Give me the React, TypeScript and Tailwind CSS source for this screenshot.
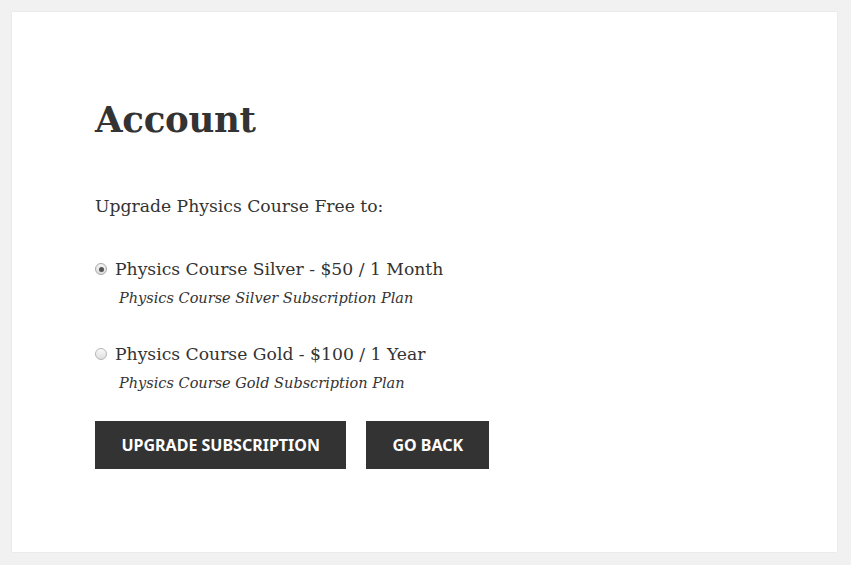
export default function App() {
  const plans = [
    {
      id: "silver",
      label: "Physics Course Silver - $50 / 1 Month",
      desc: "Physics Course Silver Subscription Plan",
      checked: true,
    },
    {
      id: "gold",
      label: "Physics Course Gold - $100 / 1 Year",
      desc: "Physics Course Gold Subscription Plan",
      checked: false,
    },
  ];

  return (
    <div className="min-h-[565px] bg-[#f1f1f1] p-3 font-['DejaVu_Serif',serif] text-[#333]">
      <div className="h-[540px] w-[825px] bg-white pl-[83px] pt-[80px] shadow-[0_0_1px_rgba(0,0,0,0.15)]">
        <h1 className="text-[35.6px] font-bold leading-[56px] tracking-[-0.3px]">Account</h1>

        <p className="mt-[44px] text-[17.2px] leading-[28px]">Upgrade Physics Course Free to:</p>

        <div className="mt-[35px] flex flex-col gap-[30px]">
          {plans.map((plan) => (
            <label key={plan.id} className="block">
              <div className="flex items-center">
                <span
                  className={
                    plan.checked
                      ? "flex h-[12px] w-[12px] items-center justify-center rounded-full border border-[#a9a9a9] bg-gradient-to-b from-[#f4f4f4] to-[#dcdcdc]"
                      : "h-[12px] w-[12px] rounded-full border border-[#b5b5b5] bg-gradient-to-b from-[#fafafa] to-[#dedede]"
                  }
                >
                  {plan.checked && <span className="h-[5px] w-[5px] rounded-full bg-[#555]" />}
                </span>
                <span className="ml-[8px] text-[17.2px] leading-[28px]">{plan.label}</span>
              </div>
              <div className="mt-[3px] pl-[24px] text-[14.5px] italic leading-[24px]">{plan.desc}</div>
            </label>
          ))}
        </div>

        <div className="mt-[26px] flex gap-[20px] font-['Noto_Sans',sans-serif]">
          <button className="h-[48px] bg-[#333] px-[26.5px] text-[16px] font-bold uppercase text-white">
            Upgrade Subscription
          </button>
          <button className="h-[48px] bg-[#333] px-[26px] text-[16px] font-bold uppercase text-white">
            Go Back
          </button>
        </div>
      </div>
    </div>
  );
}
